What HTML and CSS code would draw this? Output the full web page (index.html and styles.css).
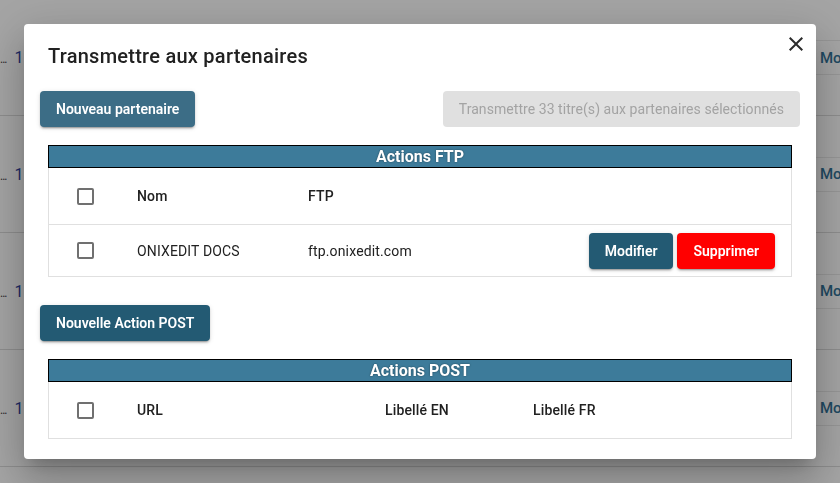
FILE: index.html
```html
<!DOCTYPE html>
<html lang="fr">
<head>
<meta charset="utf-8">
<title>Transmettre aux partenaires</title>
<link rel="stylesheet" href="styles.css">
</head>
<body>
<div class="page">
  <div class="bg-row first">
    <div class="bg-left"><span class="dots">...</span><span class="num">1</span></div>
    <div class="bg-right"><div class="bg-cell">Mo</div></div>
  </div>
  <div class="bg-row">
    <div class="bg-left"><span class="dots">...</span><span class="num">1</span></div>
    <div class="bg-right"><div class="bg-cell">Mo</div></div>
  </div>
  <div class="bg-row">
    <div class="bg-left"><span class="dots">...</span><span class="num">1</span></div>
    <div class="bg-right"><div class="bg-cell">Mo</div></div>
  </div>
  <div class="bg-row">
    <div class="bg-left"><span class="dots">...</span><span class="num">1</span></div>
    <div class="bg-right"><div class="bg-cell">Mo</div></div>
  </div>
</div>

<div class="dialog">
  <h2 class="title">Transmettre aux partenaires</h2>
  <button class="close" aria-label="Fermer">
    <svg viewBox="0 0 24 24" width="24" height="24"><path d="M19 6.41 17.59 5 12 10.59 6.41 5 5 6.41 10.59 12 5 17.59 6.41 19 12 13.41 17.59 19 19 17.59 13.41 12z" fill="#2b2b2b"/></svg>
  </button>
  <div class="content">
    <div class="btn-row">
      <button class="btn btn-primary">Nouveau partenaire</button>
      <button class="btn btn-disabled">Transmettre 33 titre(s) aux partenaires sélectionnés</button>
    </div>

    <div class="table">
      <div class="table-head">Actions FTP</div>
      <div class="row row-head">
        <div class="c-check"><span class="checkbox"></span></div>
        <div class="c-ftp1 th">Nom</div>
        <div class="c-ftp2 th">FTP</div>
      </div>
      <div class="row row-body">
        <div class="c-check"><span class="checkbox"></span></div>
        <div class="c-ftp1">ONIXEDIT DOCS</div>
        <div class="c-ftp2">ftp.onixedit.com</div>
        <div class="c-actions">
          <button class="btn btn-dark">Modifier</button>
          <button class="btn btn-red">Supprimer</button>
        </div>
      </div>
    </div>

    <div class="btn-row second">
      <button class="btn btn-dark">Nouvelle Action POST</button>
    </div>

    <div class="table">
      <div class="table-head">Actions POST</div>
      <div class="row row-head last">
        <div class="c-check"><span class="checkbox"></span></div>
        <div class="c-post1 th">URL</div>
        <div class="c-post2 th">Libellé EN</div>
        <div class="c-post3 th">Libellé FR</div>
      </div>
    </div>
  </div>
</div>
</body>
</html>
```

FILE: styles.css
```css
* { box-sizing: border-box; }

html, body {
  margin: 0;
  padding: 0;
  width: 840px;
  height: 483px;
  overflow: hidden;
}

body {
  background: #a5a5a5;
  font-family: Roboto, "Liberation Sans", sans-serif;
  color: #212121;
}

/* background page (dimmed) */
.page {
  display: flex;
  flex-direction: column;
  height: 483px;
  overflow: hidden;
}

.bg-row {
  height: 117px;
  flex: none;
  border-bottom: 1px solid #8e8e8e;
  display: flex;
  justify-content: space-between;
  align-items: center;
}

.bg-row.first { height: 116px; }

.bg-left {
  font-size: 14px;
  display: flex;
  gap: 8px;
  align-items: baseline;
}

.dots { color: #2a2a2a; font-size: 12px; letter-spacing: -1px; }
.num { color: #1c2a66; font-size: 16px; }

.bg-right {
  width: 40px;
  height: 100%;
  display: flex;
  align-items: center;
}

.bg-cell {
  width: 100%;
  height: 35px;
  border-top: 1px solid #979797;
  border-bottom: 1px solid #979797;
  display: flex;
  align-items: center;
  padding-left: 20px;
  font-size: 15px;
  font-weight: 500;
  color: #1f4a62;
}

/* dialog */
.dialog {
  position: fixed;
  top: 24px;
  left: 24px;
  width: 792px;
  height: 435px;
  background: #fff;
  border-radius: 4px;
  box-shadow: 0 11px 15px -7px rgba(0,0,0,.2), 0 24px 38px 3px rgba(0,0,0,.14), 0 9px 46px 8px rgba(0,0,0,.12);
  overflow: hidden;
}

.title {
  margin: 0;
  padding: 16px 24px;
  font-size: 20px;
  line-height: 32px;
  font-weight: 500;
  letter-spacing: 0.25px;
  color: #212121;
}

.close {
  position: absolute;
  top: 8px;
  right: 8px;
  width: 24px;
  height: 24px;
  padding: 0;
  border: 0;
  background: none;
  display: flex;
}

.content {
  padding: 3px 16px 0;
}

.btn-row {
  display: flex;
  justify-content: space-between;
}

.btn-row.second { margin-top: 28px; }

.btn {
  height: 36px;
  padding: 0 16px;
  border: 0;
  border-radius: 4px;
  font-family: Roboto, "Liberation Sans", sans-serif;
  font-size: 14px;
  font-weight: 600;
  color: #fff;
  box-shadow: 0 3px 1px -2px rgba(0,0,0,.2), 0 2px 2px 0 rgba(0,0,0,.14), 0 1px 5px 0 rgba(0,0,0,.12);
  white-space: nowrap;
}

.btn-primary { background: #3c6d86; }
.btn-dark { background: #235a73; }
.btn-red { background: #ff0000; }
.btn-disabled {
  background: #e0e0e0;
  color: #a3a3a3;
  font-weight: 400;
  letter-spacing: 0.06px;
  box-shadow: none;
}

.table {
  margin: 18px 8px 0;
}

.table-head {
  height: 23px;
  border: 1px solid #000;
  background: #3d7b9a;
  color: #fff;
  font-size: 16px;
  font-weight: 700;
  line-height: 21px;
  text-align: center;
  text-shadow: 0 0 2px rgba(0,0,0,.45);
}

.row {
  display: flex;
  align-items: center;
  border-left: 1px solid #e0e0e0;
  border-right: 1px solid #e0e0e0;
  border-bottom: 1px solid #e0e0e0;
  font-size: 14px;
  letter-spacing: 0.15px;
}

.row-head { height: 57px; }
.row-body { height: 52px; }

.th { font-weight: 500; }

.c-check {
  width: 88px;
  flex: none;
  padding-left: 28px;
  display: flex;
}

.checkbox {
  width: 17px;
  height: 17px;
  border: 2px solid #707070;
  border-radius: 2px;
}

.c-ftp1 { width: 171px; flex: none; }
.c-ftp2 { flex: 1; }

.c-actions {
  display: flex;
  gap: 4px;
  padding-right: 16px;
  letter-spacing: 0;
}

.c-post1 { width: 248px; flex: none; }
.c-post2 { width: 148px; flex: none; }
.c-post3 { flex: 1; }
```
